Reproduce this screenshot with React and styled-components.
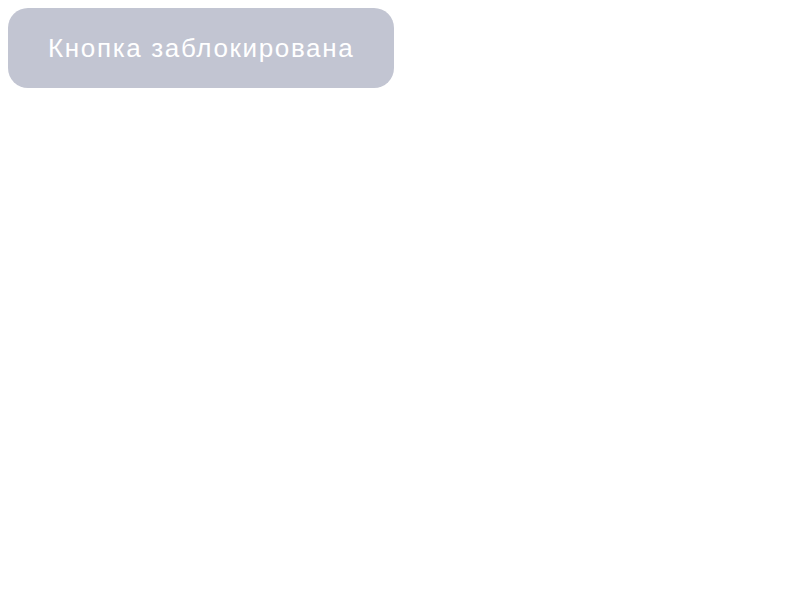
import React from 'react'
import styled, { createGlobalStyle } from 'styled-components'

const GlobalStyle = createGlobalStyle`
  body {
    margin: 8px;
    background: #ffffff;
    font-family: 'Liberation Sans', Arial, sans-serif;
  }
`

const Button = styled.button`
  display: inline-flex;
  align-items: center;
  justify-content: center;
  height: 80px;
  padding: 0 40px;
  border: none;
  border-radius: 20px;
  background-color: #c2c5d2;
  color: #ffffff;
  font-family: 'Liberation Sans', Arial, sans-serif;
  font-size: 26px;
  letter-spacing: 1.65px;
  cursor: not-allowed;
`

const App = () => {
  return (
    <>
      <GlobalStyle />
      <Button disabled>Кнопка заблокирована</Button>
    </>
  )
}

export default App
